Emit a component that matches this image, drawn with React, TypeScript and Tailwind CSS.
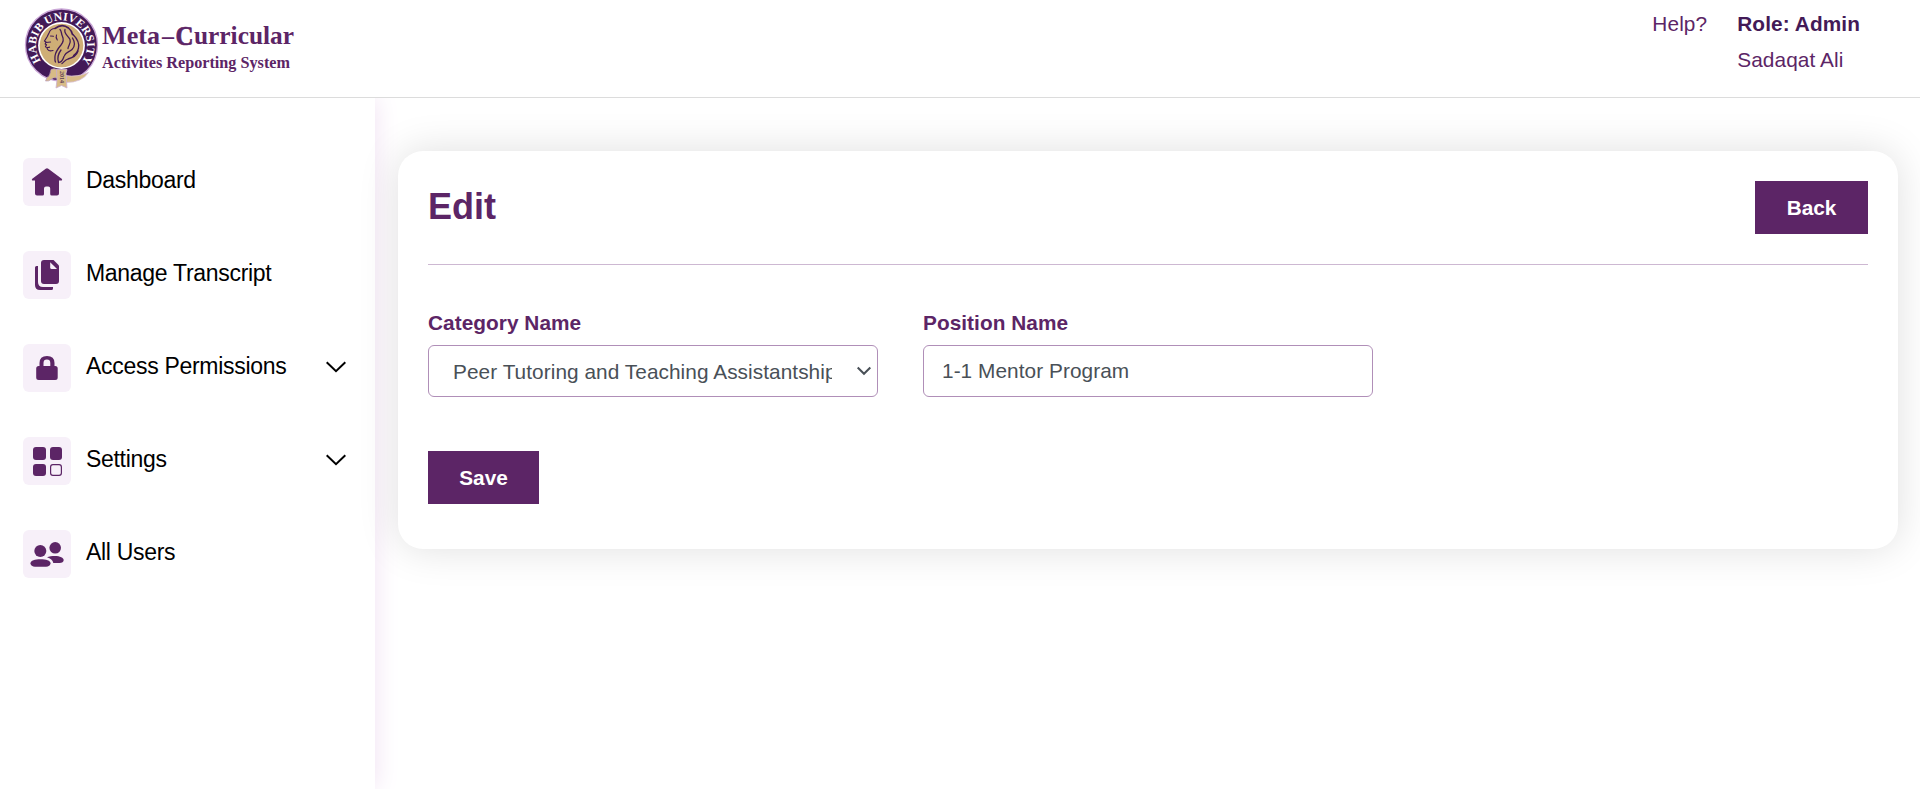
import type { ReactNode } from "react";

function Seal() {
  return (
    <svg width="84" height="92" viewBox="20 4 84 92" className="block" role="img" aria-label="Habib University">
      <defs>
        <path id="ring" d="M41.4 61.400 A25.500 25.500 0 1 1 81.800 61.400" />
      </defs>
      <circle cx="61.500" cy="45" r="36" fill="#431a57" stroke="#c9a6d6" strokeWidth="1.3" />
      <circle cx="61.500" cy="45.500" r="23.400" fill="#fff" />
      <circle cx="61.500" cy="45.500" r="21.800" fill="#cfae76" />
      <text fill="#fff" fontFamily="Liberation Serif, serif" fontWeight="700" fontSize="11.5">
        <textPath href="#ring" startOffset="0.5" textLength="113" lengthAdjust="spacingAndGlyphs">HABIB UNIVERSITY</textPath>
      </text>
      <g fill="none" stroke="#431a57" strokeLinecap="round" strokeLinejoin="round">
        <path strokeWidth="1.200" d="M55 28.500c-3 0-5 1.500-6 4.500l-2 4-2.500 4 1.500 1-.8 2 1.300.8-1 1.800c.5 1.500 2 1 4 .6M46 42.500l4.500-.5M47 48c.5 2.500 2.500 3.500 6 2.500" />
        <path strokeWidth="1.100" d="M50.500 36l3 .2M56.500 35c-.8 1.800-.3 3.500.8 5" />
        <path strokeWidth="1.600" d="M55 28.500c4.500-3.500 9.500-3.500 13.500-.5 2.500 2 3.500 4 4 6.500" />
        <path strokeWidth="1.300" d="M60 29.500c2 2 1 4.500 2.500 7 1.500 3 .5 6-1.500 8.500-3 3.500-5.500 7-6 11 0 2.500-.5 4.500.5 6" />
        <path strokeWidth="1.300" d="M65 29.500c-1.500 4 3 6 5 10 1.500 4-2 6-2 9M73 34.500c4 4 6.500 8.500 5.500 13.500-.8 4-2.500 6-5 7.500" />
        <path strokeWidth="1.300" d="M72.500 38c2.500 4 2.500 8.500-.5 11.500-2.500 2.500-6 2.500-7.500 6M78 51c-1.500 5-6 7-10 8-3 1-4 3-6 4.500M61 50c-3 4-4 8-2.500 12.500 3 0 4.500-3 5.500-6" />
      </g>
      <path d="M66 75.500Q77 77.500 88.500 72.500Q82 82.500 66 82.500z" fill="#d8bb86" stroke="#d9c2dd" strokeWidth=".8" />
      <path d="M51 69.500q3-1.500 6 0v8.500q-4-1-6 1.500-2 2-5.500 1.500l1.500-3.500q3-1 4-8z" fill="#d8bb86" stroke="#b999bd" strokeWidth=".7" />
      <path d="M56.500 69.500h10.500l-1 4 1 14.500-5.500-2.500-5.500 2.500 1-8z" fill="#d8bb86" stroke="#cdb0cf" strokeWidth=".8" />
      <text transform="translate(59.500 71) rotate(90)" fontSize="6" fontWeight="700" fill="#5b3a55" fontFamily="Liberation Serif, serif">2014</text>
    </svg>
  );
}

function Wordmark() {
  return (
    <svg width="200" height="60" viewBox="100 14 200 60" className="-ml-1 mt-[14px] block" fill="#5c2566" fontFamily="Liberation Serif, serif" fontWeight="700">
      <text y="44" fontSize="26">
        <tspan x="102" textLength="58" lengthAdjust="spacingAndGlyphs">Meta</tspan>
        <tspan x="162" textLength="12" lengthAdjust="spacingAndGlyphs">–</tspan>
        <tspan x="175.500" y="44.500" fontSize="28" textLength="18" lengthAdjust="spacingAndGlyphs" stroke="#5c2566" strokeWidth=".7">C</tspan>
        <tspan x="194" y="44" textLength="100" lengthAdjust="spacingAndGlyphs">urricular</tspan>
      </text>
      <text x="102" y="67.500" fontSize="16" textLength="188" lengthAdjust="spacingAndGlyphs">Activites Reporting System</text>
    </svg>
  );
}

const homeIcon = (
  <path d="M22.700 10.800q1.300-1 2.600 0L38.700 20.700q.8 1 .3 1.500-.3.400-1 .4H36V35.500q0 2-2 2H28.700q-1.500 0-1.500-1.500V30.500q0-2-2-2h-2.200q-2 0-2 2V36q0 1.500-1.500 1.500H14q-2 0-2-2V22.600h-2q-.7 0-1-.4-.5-.5.3-1.500z" />
);

const filesIcon = (
  <>
    <path d="M21 9H30.500L36 14.500V30q0 3-3 3H21q-3 0-3-3V12q0-3 3-3z" />
    <path d="M27.200 11.200L34 18h-5.300q-1.500 0-1.500-1.500z" fill="#f7f0f9" />
    <path d="M12 16.500q0-1.500 1.500-1.500H15V31q0 5 5 5H30v1.500q0 1.500-1.500 1.500H17q-5 0-5-5z" />
  </>
);

const lockIcon = (
  <path
    fillRule="evenodd"
    d="M16.500 22v-3q0-7 7.500-7t7.500 7v3h.7q2.500 0 2.500 2.500v9q0 2.500-2.500 2.500H15.700q-2.500 0-2.500-2.500v-9q0-2.500 2.500-2.500zM20.500 22h6.800v-3q0-3.400-3.400-3.400T20.500 19z"
  />
);

const tilesIcon = (
  <>
    <rect x="10" y="10" width="13" height="13" rx="3" />
    <rect x="27" y="10" width="12" height="13" rx="3" />
    <rect x="10" y="27" width="13" height="12" rx="3" />
    <rect x="27.600" y="27.600" width="10.800" height="10.800" rx="2.300" fill="none" stroke="currentColor" strokeWidth="1.200" />
  </>
);

const usersIcon = (
  <>
    <circle cx="17.300" cy="21" r="6" />
    <circle cx="32.200" cy="17.800" r="5.800" />
    <path d="M7.500 33.200C7.500 30.700 12 29.300 17.500 29.300S27.500 30.700 27.500 33.200C27.500 35.500 25.500 36.700 23 36.700H12C9.500 36.700 7.500 35.500 7.500 33.200z" />
    <path d="M24 27.300C26 26.400 29 26 32 26C37 26 40.700 27.800 40.700 30C40.700 32 39 33 36.500 33H30.300C29.800 30.300 27.500 28.400 24 27.300z" />
  </>
);

function NavItem({ label, icon, expandable }: { label: string; icon: ReactNode; expandable?: boolean }) {
  return (
    <li className="flex h-12 items-center">
      <span className="size-12 shrink-0 rounded-md bg-[#f7f0f9] text-[#5c2566]">
        <svg width="48" height="48" viewBox="0 0 48 48" fill="currentColor">{icon}</svg>
      </span>
      <span className="ml-[15px] flex-1 pb-1 text-[23px] leading-7 tracking-[-0.3px] text-black">{label}</span>
      {expandable && (
        <svg width="22" height="14" viewBox="0 0 22 14" className="mr-[28px] mb-[3px]" fill="none" stroke="#000" strokeWidth="2">
          <path d="M1.700 2.200L11 11.200L20.300 2.200" />
        </svg>
      )}
    </li>
  );
}

const labelClass = "mb-[7px] block text-[20.8px] leading-[30px] font-bold tracking-[0.05px] text-[#5c2566]";
const fieldClass =
  "flex h-[52px] w-[450px] items-center rounded-[6px] border border-[#b08fb8] bg-white text-[20.8px] tracking-[0.06px] text-[#495057]";

export default function App() {
  return (
    <div className="flex h-[789px] w-full flex-col overflow-hidden bg-white font-['Liberation_Sans',Arial,sans-serif]">
      <header className="z-10 flex h-[98px] shrink-0 justify-between border-b border-[#dcdcdc] bg-white">
        <div className="flex pt-1 pl-5">
          <Seal />
          <div className="-mt-1">
            <Wordmark />
          </div>
        </div>
        <div className="flex gap-[30px] pr-[60px] pt-[6px] text-[20.8px] leading-9 tracking-[0.1px] text-[#5c2566]">
          <span>Help?</span>
          <div>
            <div className="font-bold text-[#431a57]">Role: Admin</div>
            <div>Sadaqat Ali</div>
          </div>
        </div>
      </header>
      <div className="flex min-h-0 flex-1">
        <nav className="w-[375px] shrink-0 bg-white pt-[60px] pl-[23px] shadow-[0_0_24px_#f0e0f2]">
          <ul className="flex flex-col gap-[45px]">
            <NavItem label="Dashboard" icon={homeIcon} />
            <NavItem label="Manage Transcript" icon={filesIcon} />
            <NavItem label="Access Permissions" icon={lockIcon} expandable />
            <NavItem label="Settings" icon={tilesIcon} expandable />
            <NavItem label="All Users" icon={usersIcon} />
          </ul>
        </nav>
        <main className="flex-1 pt-[53px] pr-[22px] pl-[23px]">
          <section className="h-[398px] rounded-[25px] bg-white p-[30px] shadow-[0_0_40px_rgba(0,0,0,0.13)]">
            <div className="flex h-[84px] items-start justify-between border-b border-[#cdb8d2]">
              <h1 className="pt-[5px] text-[36px] leading-[42px] font-bold text-[#5c2566]">Edit</h1>
              <button className="h-[53px] w-[113px] bg-[#5c2566] text-[20.8px] font-bold text-white">Back</button>
            </div>
            <div className="mt-[43px] flex gap-[45px]">
              <div>
                <label className={labelClass}>Category Name</label>
                <div className={fieldClass}>
                  <span className="ml-6 w-[379px] overflow-hidden pt-0.5 whitespace-nowrap">Peer Tutoring and Teaching Assistantship</span>
                  <svg width="16" height="10" viewBox="0 0 16 10" className="ml-6" fill="none" stroke="#495057" strokeWidth="2">
                    <path d="M1.700 1.500L8 7.800L14.300 1.500" />
                  </svg>
                </div>
              </div>
              <div>
                <label className={labelClass}>Position Name</label>
                <div className={fieldClass}>
                  <span className="ml-[18px]">1-1 Mentor Program</span>
                </div>
              </div>
            </div>
            <button className="mt-[54px] h-[53px] w-[111px] bg-[#5c2566] text-[20.8px] font-bold text-white">Save</button>
          </section>
        </main>
      </div>
    </div>
  );
}
